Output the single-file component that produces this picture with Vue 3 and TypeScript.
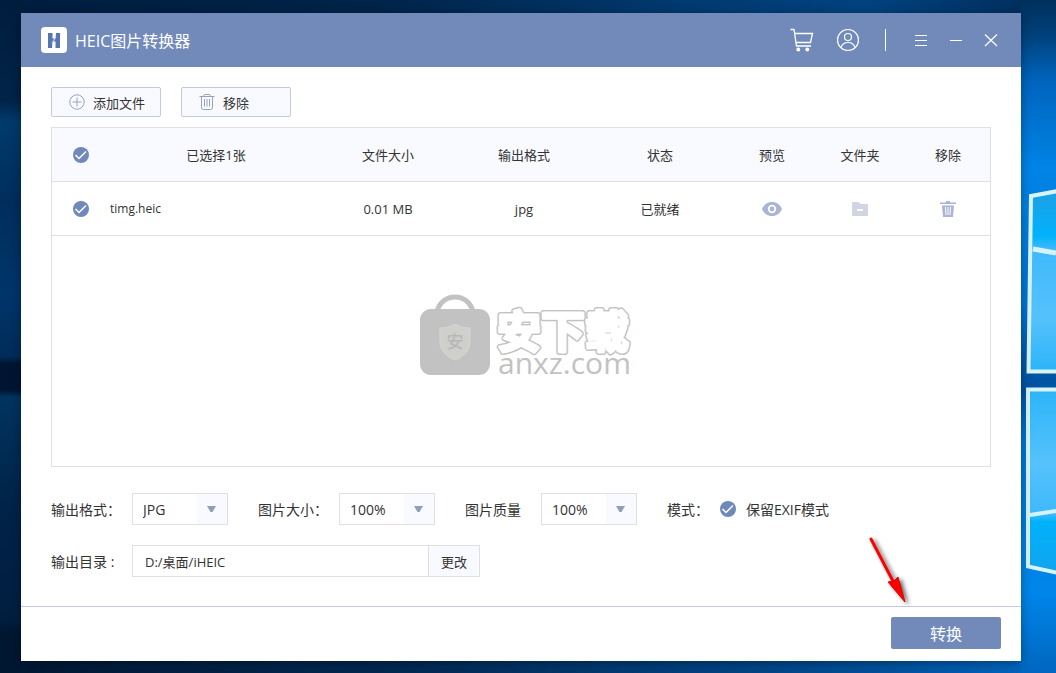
<script setup lang="ts">
import { ref } from 'vue'

interface FileItem {
  name: string
  size: string
  format: string
  status: string
  checked: boolean
}

const files = ref<FileItem[]>([
  { name: 'timg.heic', size: '0.01 MB', format: 'jpg', status: '已就绪', checked: true },
])
const allChecked = ref(true)
const format = ref('JPG')
const size = ref('100%')
const quality = ref('100%')
const keepExif = ref(true)
const outputDir = ref('D:/桌面/iHEIC')

function toggleAll(): void {
  files.value.forEach((f) => (f.checked = allChecked.value))
}
</script>

<template>
  <div class="desktop">
    <svg class="wallpaper" viewBox="0 0 1056 673" preserveAspectRatio="none" aria-hidden="true">
      <defs>
        <linearGradient id="wp-h" x1="0" x2="1" y1="0" y2="0">
          <stop offset="0" stop-color="#001d3e" />
          <stop offset="0.35" stop-color="#002349" />
          <stop offset="0.65" stop-color="#003a70" />
          <stop offset="0.82" stop-color="#00427f" />
          <stop offset="1" stop-color="#002c58" />
        </linearGradient>
        <linearGradient id="wp-bottom" x1="0" x2="1" y1="0" y2="0">
          <stop offset="0" stop-color="#001732" />
          <stop offset="0.4" stop-color="#002a55" />
          <stop offset="0.8" stop-color="#004c94" />
          <stop offset="1" stop-color="#0068c4" />
        </linearGradient>
        <linearGradient id="wp-left" x1="0" x2="0" y1="0" y2="1">
          <stop offset="0" stop-color="#001d3e" />
          <stop offset="0.15" stop-color="#002448" />
          <stop offset="0.18" stop-color="#003a6c" />
          <stop offset="0.3" stop-color="#002e5c" />
          <stop offset="0.44" stop-color="#00356b" />
          <stop offset="0.53" stop-color="#002c58" />
          <stop offset="0.54" stop-color="#001533" />
          <stop offset="0.58" stop-color="#001533" />
          <stop offset="0.59" stop-color="#003460" />
          <stop offset="0.75" stop-color="#002349" />
          <stop offset="0.92" stop-color="#001f40" />
          <stop offset="0.94" stop-color="#001732" />
          <stop offset="1" stop-color="#001732" />
        </linearGradient>
        <linearGradient id="wp-right" x1="0" x2="0" y1="0" y2="1">
          <stop offset="0" stop-color="#00305c" />
          <stop offset="0.05" stop-color="#004079" />
          <stop offset="0.12" stop-color="#0064bd" />
          <stop offset="0.25" stop-color="#0084e6" />
          <stop offset="0.45" stop-color="#0075d6" />
          <stop offset="0.55" stop-color="#0054a4" />
          <stop offset="0.58" stop-color="#0054a4" />
          <stop offset="0.65" stop-color="#0075d6" />
          <stop offset="0.88" stop-color="#0086ea" />
          <stop offset="1" stop-color="#0066c0" />
        </linearGradient>
        <linearGradient id="pane-top" x1="0" x2="0" y1="0" y2="1">
          <stop offset="0" stop-color="#1e9fe6" />
          <stop offset="0.25" stop-color="#00b2fb" />
          <stop offset="0.32" stop-color="#3fb9fb" />
          <stop offset="0.7" stop-color="#55c2fc" />
          <stop offset="1" stop-color="#2cb4f8" />
        </linearGradient>
        <linearGradient id="pane-bottom" x1="0" x2="0" y1="0" y2="1">
          <stop offset="0" stop-color="#2cb4f8" />
          <stop offset="0.4" stop-color="#55c2fc" />
          <stop offset="0.68" stop-color="#3fb9fb" />
          <stop offset="0.72" stop-color="#00b2fb" />
          <stop offset="1" stop-color="#12a4ee" />
        </linearGradient>
      </defs>
      <rect width="1056" height="673" fill="url(#wp-h)" />
      <rect y="640" width="1056" height="33" fill="url(#wp-bottom)" />
      <rect width="21" height="673" fill="url(#wp-left)" />
      <rect x="1021" width="35" height="673" fill="url(#wp-right)" />
      <path d="M1031 196 L1058 191 V371.500 H1028.500 Z" fill="url(#pane-top)" stroke="#d9f5f2" stroke-width="4" />
      <path d="M1033 249 L1056 253" stroke="#d5f2ff" stroke-width="5" />
      <path d="M1028 389.500 H1058 V573 L1028 566.500 Z" fill="url(#pane-bottom)" stroke="#d9f5f2" stroke-width="4" />
      <path d="M1030 515 L1056 511" stroke="#d5f2ff" stroke-width="4" />
    </svg>

    <main class="window">
      <header class="titlebar">
        <svg class="logo" viewBox="0 0 26 26" aria-hidden="true">
          <rect width="26" height="26" rx="4" fill="#fff" />
          <path d="M7 6H11.500V11.500H14.500L15 6H19V21H14.500V14.500H11.500L11 21H7Z" fill="#5576b0" />
          <path d="M11 16.500L15 9.500" stroke="#c3cfe5" stroke-width="1.200" />
        </svg>
        <h1>HEIC图片转换器</h1>
        <nav class="actions">
          <button type="button" class="icon-btn cart" aria-label="购物车">
            <svg viewBox="0 0 24 24" width="24" height="24" fill="none" stroke="#fff" stroke-width="1.300">
              <path d="M0.500 1.500H4L6.500 18H21" />
              <path d="M4.700 5.500H22.500L20.500 14.500H6" />
              <circle cx="8.300" cy="21.500" r="1.300" fill="#fff" />
              <circle cx="17.300" cy="21.500" r="1.300" fill="#fff" />
            </svg>
          </button>
          <button type="button" class="icon-btn user" aria-label="用户">
            <svg viewBox="0 0 24 24" width="24" height="24" fill="none" stroke="#fff" stroke-width="1.200">
              <circle cx="12" cy="12" r="10.500" />
              <circle cx="12" cy="9" r="3.500" />
              <path d="M5 19.500C6 16.500 8.500 14.500 12 14.500S18 16.500 19 19.500" />
            </svg>
          </button>
          <span class="divider"></span>
          <button type="button" class="icon-btn small" aria-label="菜单">
            <svg viewBox="0 0 14 14" width="14" height="14" stroke="#fff">
              <path d="M1 2.500H13M1 7.500H13M1 12.500H13" />
            </svg>
          </button>
          <button type="button" class="icon-btn small" aria-label="最小化">
            <svg viewBox="0 0 14 14" width="14" height="14" stroke="#fff">
              <path d="M1 7.500H13" />
            </svg>
          </button>
          <button type="button" class="icon-btn small" aria-label="关闭">
            <svg viewBox="0 0 14 14" width="14" height="14" stroke="#fff" stroke-width="1.200">
              <path d="M1 1.500L13 13M13 1.500L1 13" />
            </svg>
          </button>
        </nav>
      </header>

      <section class="content">
        <div class="toolbar">
          <button type="button" class="tool">
            <svg viewBox="0 0 16 16" width="16" height="16" fill="none" stroke="#96a1c2">
              <circle cx="8" cy="8" r="7.200" />
              <path d="M3.500 8H12.500M8 3.500V12.500" />
            </svg>
            添加文件
          </button>
          <button type="button" class="tool">
            <svg viewBox="0 0 16 16" width="16" height="16" fill="none" stroke="#96a1c2">
              <path d="M0.500 2.500H15.500M4.500 2L5.500 0.500H10.500L11.500 2" />
              <path d="M2.500 2.500V13.500Q2.500 15.500 4.500 15.500H11.500Q13.500 15.500 13.500 13.500V2.500" />
              <path d="M5.500 5V12.500M8 5V12.500M10.500 5V12.500" />
            </svg>
            移除
          </button>
        </div>

        <div class="list">
          <table>
            <colgroup>
              <col class="c-check" />
              <col />
              <col class="c-mid" />
              <col class="c-mid" />
              <col class="c-mid" />
              <col class="c-act" />
              <col class="c-act" />
              <col class="c-act" />
            </colgroup>
            <thead>
              <tr>
                <th class="pick">
                  <span class="check">
                    <input v-model="allChecked" type="checkbox" aria-label="全选" @change="toggleAll" />
                    <svg viewBox="0 0 16 16"><path d="M2.500 8L6 11.500L13 4.500" /></svg>
                  </span>
                </th>
                <th>已选择1张</th>
                <th>文件大小</th>
                <th>输出格式</th>
                <th>状态</th>
                <th>预览</th>
                <th>文件夹</th>
                <th>移除</th>
              </tr>
            </thead>
            <tbody>
              <tr v-for="file in files" :key="file.name">
                <td class="pick">
                  <span class="check">
                    <input v-model="file.checked" type="checkbox" :aria-label="file.name" />
                    <svg viewBox="0 0 16 16"><path d="M2.500 8L6 11.500L13 4.500" /></svg>
                  </span>
                </td>
                <td class="name">{{ file.name }}</td>
                <td>{{ file.size }}</td>
                <td>{{ file.format }}</td>
                <td>{{ file.status }}</td>
                <td>
                  <button type="button" class="row-btn" aria-label="预览">
                    <svg viewBox="0 0 20 16" width="20" height="16">
                      <path d="M0 8C2 3.500 5.500 1 10 1S18 3.500 20 8C18 12.500 14.500 15 10 15S2 12.500 0 8Z" fill="#a9b4d6" />
                      <circle cx="10" cy="8" r="3.300" fill="none" stroke="#fff" stroke-width="1.800" />
                    </svg>
                  </button>
                </td>
                <td>
                  <button type="button" class="row-btn" aria-label="文件夹">
                    <svg viewBox="0 0 16 16" width="16" height="16">
                      <path d="M0 2Q0 1 1 1H6.500L8.500 3H15Q16 3 16 4V14Q16 15 15 15H1Q0 15 0 14Z" fill="#d0d5e2" />
                      <path d="M5 9H11" stroke="#fff" stroke-width="2" />
                    </svg>
                  </button>
                </td>
                <td>
                  <button type="button" class="row-btn" aria-label="移除">
                    <svg viewBox="0 0 16 16" width="16" height="16">
                      <path d="M0 1.500H5.500L6.500 0H9.500L10.500 1.500H16V3H0Z" fill="#a9b4d6" />
                      <path d="M2 4.500H14L13 16H3Z" fill="#a9b4d6" />
                      <path d="M5.500 6L6 14M8 6V14M10.500 6L10 14" stroke="#fff" fill="none" />
                    </svg>
                  </button>
                </td>
              </tr>
            </tbody>
          </table>
          <div class="empty">
            <svg class="mark" viewBox="0 0 216 96" width="216" height="96" aria-hidden="true">
              <path d="M18 18C22 -2 50 -2 54 18" fill="none" stroke="#c2c2c2" stroke-width="5" />
              <rect x="1" y="15" width="70" height="66" rx="11" fill="#c2c2c2" />
              <path d="M36 30C31 33 26 34 21 34V48C21 57 28 63 36 66C44 63 51 57 51 48V34C46 34 41 33 36 30Z" fill="#cfcfcc" stroke="#d6d6d4" />
              <text x="36" y="54" text-anchor="middle" class="mark-badge">安</text>
              <g class="mark-title">
                <text id="mark-name" x="78" y="54">安下载</text>
                <use href="#mark-name" class="inner" />
              </g>
              <text x="79" y="80" class="mark-site">anxz.com</text>
            </svg>
          </div>
        </div>

        <form class="options" @submit.prevent>
          <div class="line">
            <div class="field">
              <label for="fmt">输出格式：</label>
              <span class="select">
                <select id="fmt" v-model="format"><option>JPG</option><option>PNG</option></select>
                <svg viewBox="0 0 9 7"><path d="M0 0H9L5.500 6H3.500Z" /></svg>
              </span>
            </div>
            <div class="field">
              <label for="size">图片大小：</label>
              <span class="select">
                <select id="size" v-model="size"><option>100%</option><option>50%</option></select>
                <svg viewBox="0 0 9 7"><path d="M0 0H9L5.500 6H3.500Z" /></svg>
              </span>
            </div>
            <div class="field quality">
              <label for="quality">图片质量</label>
              <span class="select">
                <select id="quality" v-model="quality"><option>100%</option><option>50%</option></select>
                <svg viewBox="0 0 9 7"><path d="M0 0H9L5.500 6H3.500Z" /></svg>
              </span>
            </div>
            <div class="field">
              <span>模式：</span>
              <span class="check">
                <input id="exif" v-model="keepExif" type="checkbox" />
                <svg viewBox="0 0 16 16"><path d="M2.500 8L6 11.500L13 4.500" /></svg>
              </span>
              <label for="exif">保留EXIF模式</label>
            </div>
          </div>
          <div class="line">
            <div class="field">
              <label for="dir" class="dir-label">输出目录 :</label>
              <span class="path">
                <input id="dir" v-model="outputDir" type="text" />
                <button type="button">更改</button>
              </span>
            </div>
          </div>
        </form>
      </section>

      <footer class="footer">
        <button type="button" class="convert">转换</button>
      </footer>

      <svg class="pointer" viewBox="0 0 56 80" width="56" height="80" aria-hidden="true">
        <path d="M10 10L34 56" stroke="#f00" stroke-width="3" stroke-linecap="round" />
        <path d="M44 73L27 53L33 52L37 48Z" fill="#f00" stroke="#d00" />
      </svg>
    </main>
  </div>
</template>

<style>
body {
  margin: 0;
}
</style>

<style scoped>
.desktop {
  position: relative;
  display: flex;
  box-sizing: border-box;
  min-height: 100vh;
  padding: 13px 35px 12px 21px;
  background: #001d3e;
  font-family: 'Open Sans', 'Noto Sans CJK SC', sans-serif;
  font-size: 13px;
  color: #333;
  overflow: hidden;
}
.wallpaper {
  position: absolute;
  inset: 0;
  width: 100%;
  height: 100%;
}
button,
input,
select {
  margin: 0;
  font: inherit;
  color: inherit;
}
.window {
  position: relative;
  flex: 1;
  display: flex;
  flex-direction: column;
  min-width: 0;
  background: #fff;
  box-shadow: 0 2px 10px rgba(0, 0, 0, 0.35);
}
.titlebar {
  display: flex;
  align-items: center;
  box-sizing: border-box;
  height: 54px;
  padding: 0 23px 0 20px;
  background: #728aba;
  color: #fff;
}
.logo {
  width: 26px;
  height: 26px;
  margin-right: 8px;
}
h1 {
  margin: 0;
  font-size: 16px;
  font-weight: 400;
}
.actions {
  display: flex;
  align-items: center;
  margin-left: auto;
}
.icon-btn {
  display: flex;
  padding: 0;
  border: 0;
  background: none;
}
.cart {
  margin-right: 22px;
}
.user {
  margin-right: 25px;
}
.divider {
  width: 1px;
  height: 22px;
  margin-right: 7px;
  background: #fff;
}
.small {
  margin-left: 21px;
}
.content {
  flex: 1;
  display: flex;
  flex-direction: column;
  padding: 20px 30px 29px;
}
.toolbar {
  display: flex;
  gap: 20px;
  margin-bottom: 10px;
}
.tool {
  display: flex;
  align-items: center;
  gap: 8px;
  box-sizing: border-box;
  min-width: 110px;
  height: 30px;
  padding: 0 12px 0 17px;
  border: 1px solid #c3cae0;
  border-radius: 2px;
  background: #f9faff;
  white-space: nowrap;
}
.list {
  flex: 1;
  display: flex;
  flex-direction: column;
  border: 1px solid #dfe0e4;
}
table {
  width: 100%;
  table-layout: fixed;
  border-collapse: separate;
  border-spacing: 0;
}
.c-check {
  width: 58px;
}
.c-mid {
  width: 136px;
}
.c-act {
  width: 88px;
}
th,
td {
  box-sizing: border-box;
  height: 54px;
  padding: 0 0 0 4px;
  border-bottom: 1px solid #dfe0e4;
  font-weight: 400;
  text-align: center;
}
th {
  background: #f9faff;
}
.pick {
  padding: 0;
}
td.name {
  padding: 0;
  font-size: 12px;
  text-align: left;
}
.check {
  display: grid;
  width: 16px;
  height: 16px;
}
.pick .check {
  margin: 0 auto;
}
.check input,
.check svg {
  grid-area: 1 / 1;
  width: 16px;
  height: 16px;
}
.check input {
  appearance: none;
  border-radius: 50%;
  background: #d0d5e2;
}
.check input:checked {
  background: #6f89ba;
}
.check svg {
  fill: none;
  stroke: #fff;
  stroke-width: 1.500;
  pointer-events: none;
}
.row-btn {
  display: flex;
  margin: 0 auto;
  padding: 0;
  border: 0;
  background: none;
}
.empty {
  flex: 1;
  display: flex;
  align-items: center;
  justify-content: center;
  padding: 0 0 18px 12px;
}
.mark-badge {
  font-size: 17px;
  font-weight: 500;
  fill: #b8b8b8;
}
.mark-title {
  font-size: 44px;
  font-weight: 700;
  fill: #c2c2c2;
  stroke: #c2c2c2;
  stroke-width: 6px;
  stroke-linejoin: round;
}
.mark-title .inner {
  fill: #fff;
  stroke: #fff;
  stroke-width: 3px;
}
.mark-site {
  font-size: 30px;
  font-weight: 500;
  fill: #c2c2c2;
}
.options {
  display: flex;
  flex-direction: column;
  gap: 20px;
  margin-top: 26px;
  font-size: 14px;
}
.line {
  display: flex;
  gap: 30px;
}
.field {
  display: flex;
  align-items: center;
  gap: 11px;
  height: 32px;
  white-space: nowrap;
}
.field > .check {
  margin-right: -1px;
}
.quality {
  gap: 20px;
}
.dir-label {
  min-width: 70px;
}
.select {
  position: relative;
  display: flex;
  width: 96px;
  height: 32px;
}
.select select {
  appearance: none;
  width: 100%;
  padding: 0 10px;
  border: 1px solid #dfe0e4;
  border-radius: 0;
  background: linear-gradient(to left, #f9faff 30px, #fff 30px);
}
.select svg {
  position: absolute;
  top: 13px;
  right: 12px;
  width: 9px;
  height: 7px;
  fill: #8f9fb9;
  pointer-events: none;
}
.path {
  display: flex;
  height: 32px;
  font-size: 13px;
}
.path input {
  box-sizing: border-box;
  width: 297px;
  padding: 0 12px;
  border: 1px solid #dfe0e4;
  border-radius: 0;
  background: #fff;
}
.path button {
  width: 52px;
  margin-left: -1px;
  padding: 0;
  border: 1px solid #dfe0e4;
  background: #f9faff;
}
.footer {
  display: flex;
  justify-content: flex-end;
  padding: 10px 20px 12px;
  border-top: 1px solid #c3cae0;
}
.convert {
  width: 110px;
  height: 32px;
  padding: 0;
  border: 0;
  border-radius: 2px;
  background: #728aba;
  color: #fff;
  font-size: 16px;
}
.pointer {
  position: absolute;
  right: 104px;
  bottom: 52px;
  filter: drop-shadow(3px 2px 2px rgba(0, 0, 0, 0.6));
  pointer-events: none;
}
</style>
